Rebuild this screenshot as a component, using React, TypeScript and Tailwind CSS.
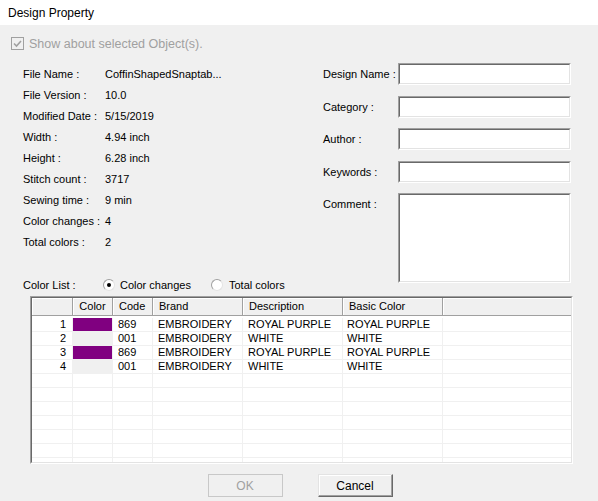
import React from 'react'

const info: [string, string][] = [
  ['File Name :', 'CoffinShapedSnaptab...'],
  ['File Version :', '10.0'],
  ['Modified Date :', '5/15/2019'],
  ['Width :', '4.94 inch'],
  ['Height :', '6.28 inch'],
  ['Stitch count :', '3717'],
  ['Sewing time :', '9 min'],
  ['Color changes :', '4'],
  ['Total colors :', '2'],
]

const rows = [
  { n: '1', swatch: 'bg-[#800080]', code: '869', brand: 'EMBROIDERY', desc: 'ROYAL PURPLE', basic: 'ROYAL PURPLE' },
  { n: '2', swatch: 'bg-[#f0f0f0]', code: '001', brand: 'EMBROIDERY', desc: 'WHITE', basic: 'WHITE' },
  { n: '3', swatch: 'bg-[#800080]', code: '869', brand: 'EMBROIDERY', desc: 'ROYAL PURPLE', basic: 'ROYAL PURPLE' },
  { n: '4', swatch: 'bg-[#f0f0f0]', code: '001', brand: 'EMBROIDERY', desc: 'WHITE', basic: 'WHITE' },
]

// sunken 3d frame, used by edit boxes and the list
function Sunken({ className, children }: { className: string; children?: React.ReactNode }) {
  return (
    <div className={`border border-t-[#a0a0a0] border-l-[#a0a0a0] border-r-white border-b-white ${className}`}>
      <div className="w-full h-full border border-t-[#696969] border-l-[#696969] border-r-[#e3e3e3] border-b-[#e3e3e3] bg-white overflow-hidden">
        {children}
      </div>
    </div>
  )
}

function Radio({ checked }: { checked?: boolean }) {
  return (
    <span className="w-[12px] h-[12px] rounded-full border border-t-[#a0a0a0] border-l-[#a0a0a0] border-r-[#e3e3e3] border-b-[#e3e3e3] bg-white flex items-center justify-center shrink-0">
      {checked && <span className="w-[4px] h-[4px] rounded-full bg-black" />}
    </span>
  )
}

function Field({ label, tall }: { label: string; tall?: boolean }) {
  return (
    <div className="flex items-start">
      <span className="w-[75px] pt-[4px] leading-[14px]">{label}</span>
      <Sunken className={tall ? 'w-[173px] h-[90px]' : 'w-[173px] h-[22px]'} />
    </div>
  )
}

const cols = ['w-[41px]', 'w-[40px]', 'w-[40px]', 'w-[90px]', 'w-[100px]', 'w-[100px]']

export default function App() {
  return (
    <div className="w-[598px] h-[501px] bg-[#f0f0f0] font-['Liberation_Sans',Arial,sans-serif] text-[11px] text-black overflow-hidden">
      <div className="h-[25px] bg-white pl-[8px] flex items-center text-[12px]">Design Property</div>

      <div className="h-[38px] pt-[12px] pl-[11px] flex items-start gap-[5px] text-[12.5px] text-[#a0a0a0]">
        <span className="w-[13px] h-[13px] border border-[#a0a0a0] bg-[#f0f0f0] flex items-center justify-center">
          <svg viewBox="0 0 11 11" className="w-[11px] h-[11px]">
            <path d="M2 5.5 L4.5 8 L9 3" fill="none" stroke="#a0a0a0" strokeWidth="1.6" />
          </svg>
        </span>
        <span className="leading-[14px]">Show about selected Object(s).</span>
      </div>

      <div className="flex">
        <div className="w-[300px] pl-[23px] pt-[1px] flex flex-col">
          {info.map(([k, v]) => (
            <div key={k} className="h-[21px] flex items-center">
              <span className="w-[82px]">{k}</span>
              <span>{v}</span>
            </div>
          ))}
          <div className="mt-[25px] h-[14px] flex items-center">
            <span className="w-[80px]">Color List :</span>
            <span className="w-[108px] flex items-center gap-[5px]">
              <Radio checked />
              <span>Color changes</span>
            </span>
            <span className="flex items-center gap-[6px]">
              <Radio />
              <span>Total colors</span>
            </span>
          </div>
        </div>

        <div className="pl-[23px] flex flex-col">
          <Field label="Design Name :" />
          <div className="mt-[11px]"><Field label="Category :" /></div>
          <div className="mt-[10px]"><Field label="Author :" /></div>
          <div className="mt-[11px]"><Field label="Keywords :" /></div>
          <div className="mt-[10px]"><Field label="Comment :" tall /></div>
        </div>
      </div>

      <div className="mt-[4px] ml-[30px]">
        <Sunken className="w-[543px] h-[168px]">
          <div className="flex h-[18px] bg-[#f0f0f0] border-b border-[#a0a0a0]">
            {['', 'Color', 'Code', 'Brand', 'Description', 'Basic Color'].map((h, i) => (
              <div
                key={i}
                className={`${cols[i]} shrink-0 border-r border-r-[#a0a0a0] shadow-[inset_1px_1px_0_#ffffff] leading-[17px] ${i === 1 ? 'text-center' : 'pl-[6px]'}`}
              >
                {h}
              </div>
            ))}
            <div className="flex-1 shadow-[inset_1px_1px_0_#ffffff]" />
          </div>
          <div className="h-[2px]" />
          {Array.from({ length: 11 }).map((_, r) => {
            const row = rows[r]
            return (
              <div key={r} className="flex h-[14px] border-b border-[#f0f0f0] leading-[13px]">
                <div className={`${cols[0]} shrink-0 border-r border-[#f0f0f0] text-right pr-[6px]`}>{row?.n}</div>
                <div className={`${cols[1]} shrink-0 border-r border-[#f0f0f0] ${row ? row.swatch : ''}`} />
                <div className={`${cols[2]} shrink-0 border-r border-[#f0f0f0] pl-[5px]`}>{row?.code}</div>
                <div className={`${cols[3]} shrink-0 border-r border-[#f0f0f0] pl-[5px]`}>{row?.brand}</div>
                <div className={`${cols[4]} shrink-0 border-r border-[#f0f0f0] pl-[5px]`}>{row?.desc}</div>
                <div className={`${cols[5]} shrink-0 border-r border-[#f0f0f0] pl-[4px]`}>{row?.basic}</div>
                <div className="flex-1" />
              </div>
            )
          })}
        </Sunken>
      </div>

      <div className="mt-[10px] flex justify-center gap-[35px] pl-[2px]">
        <button className="w-[75px] h-[23px] border border-[#c8c8c8] bg-[#f0f0f0] text-[#a0a0a0] text-[12px]">OK</button>
        <button className="w-[75px] h-[23px] border border-t-[#e3e3e3] border-l-[#e3e3e3] border-r-[#696969] border-b-[#696969] shadow-[inset_-1px_-1px_0_#a0a0a0,inset_1px_1px_0_#ffffff] bg-[#f0f0f0] text-[12px]">Cancel</button>
      </div>
    </div>
  )
}
